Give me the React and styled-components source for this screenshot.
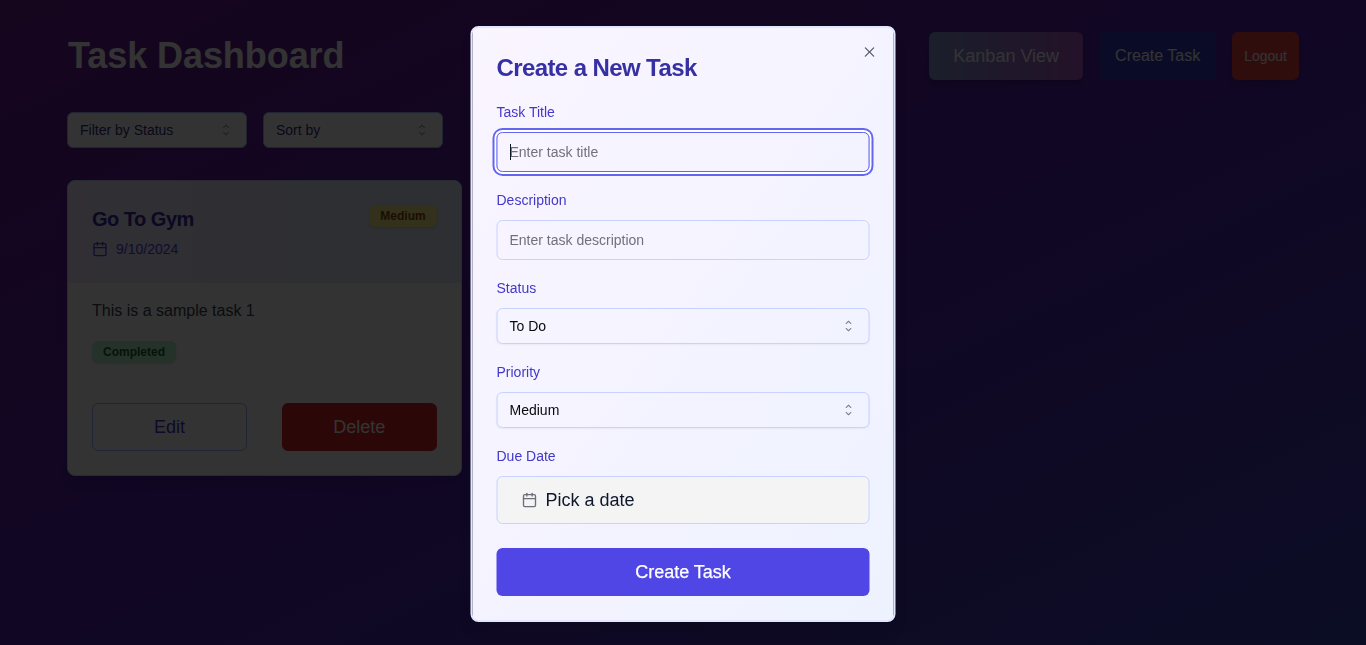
import React from "react";
import styled, { createGlobalStyle } from "styled-components";
import { Calendar } from "lucide-react";

const Global = createGlobalStyle`
  *, *::before, *::after { box-sizing: border-box; }
  html, body { margin: 0; height: 100%; overflow: hidden; }
  body { font-family: "Liberation Sans", Arial, sans-serif; font-size: 16px; line-height: 24px; color: #0f172a; }
  button, input { font: inherit; color: inherit; margin: 0; }
  h1, h2, h3, p { margin: 0; }
`;

const Page = styled.div`
  height: 645px;
  background: linear-gradient(to bottom right, #6c1a92 0%, #5522b4 50%, #3a42b8 100%);
  padding: 32px 67px;
`;

const Header = styled.header`
  display: flex;
  justify-content: space-between;
  align-items: center;
  margin-bottom: 32px;
`;

const Title = styled.h1`
  padding-left: 1px;
  font-size: 36px;
  line-height: 40px;
  font-weight: 700;
  letter-spacing: -0.07px;
  color: #fff;
`;

const Actions = styled.div`
  display: flex;
  gap: 16px;
`;

const HeaderButton = styled.button`
  height: 48px;
  border: 0;
  border-radius: 6px;
  padding: 0 ${(p) => p.$pad}px;
  font-size: ${(p) => p.$size}px;
  color: #fff;
  background: ${(p) => p.$bg};
  box-shadow: ${(p) => (p.$flat ? "none" : "0 4px 6px -1px rgba(0,0,0,.15), 0 2px 4px -2px rgba(0,0,0,.15)")};
`;

const Filters = styled.div`
  display: flex;
  gap: 16px;
  margin-bottom: 32px;
`;

const SelectBox = styled.div`
  display: flex;
  align-items: center;
  justify-content: space-between;
  width: ${(p) => p.$width || "100%"};
  height: 36px;
  padding: 0 12px;
  border: 1px solid ${(p) => p.$border || "#c7d2fe"};
  border-radius: 6px;
  background: ${(p) => p.$bg || "transparent"};
  color: ${(p) => p.$color || "#09090b"};
  font-size: 14px;
  line-height: 20px;
  box-shadow: 0 1px 2px rgba(0, 0, 0, 0.05);
  svg { opacity: .5; }
`;

const Grid = styled.main`
  display: grid;
  grid-template-columns: repeat(3, 1fr);
  gap: 24px;
`;

const Card = styled.article`
  border: 1px solid #c7d2fe;
  border-radius: 8px;
  overflow: hidden;
  background: #fff;
  box-shadow: 0 10px 15px -3px rgba(0,0,0,.1), 0 4px 6px -4px rgba(0,0,0,.1);
`;

const CardHead = styled.div`
  display: flex;
  justify-content: space-between;
  align-items: flex-start;
  height: 102px;
  padding: 24px;
  background: linear-gradient(to right, #f3e8ff, #dfe8fe);
`;

const CardTitle = styled.h3`
  font-size: 20px;
  line-height: 28px;
  font-weight: 700;
  letter-spacing: -0.025em;
  color: #3730a3;
`;

const DateRow = styled.div`
  display: flex;
  align-items: center;
  gap: 8px;
  margin-top: 6px;
  font-size: 14px;
  line-height: 20px;
  color: #4f46e5;
`;

const Badge = styled.span`
  display: inline-flex;
  align-items: center;
  height: 22px;
  padding: 0 11px;
  border-radius: 6px;
  font-size: 12px;
  line-height: 16px;
  font-weight: 700;
  color: ${(p) => p.$color};
  background: ${(p) => p.$bg};
  box-shadow: 0 1px 3px rgba(0,0,0,.1), 0 1px 2px -1px rgba(0,0,0,.1);
`;

const CardBody = styled.div`
  display: flex;
  flex-direction: column;
  align-items: flex-start;
  gap: 18px;
  padding: 16px 24px 0;
  color: #374151;
`;

const CardFoot = styled.div`
  display: flex;
  justify-content: space-between;
  padding: 40px 24px 24px;
`;

const CardButton = styled.button`
  width: 155px;
  height: 48px;
  border: 1px solid ${(p) => p.$border};
  border-radius: 6px;
  background: ${(p) => p.$bg};
  color: ${(p) => p.$color};
  font-size: 18px;
`;

const Overlay = styled.div`
  position: fixed;
  inset: 0;
  background: rgba(0, 0, 0, 0.8);
`;

const Dialog = styled.section`
  position: fixed;
  left: 50%;
  top: 324px;
  transform: translate(-50%, -50%);
  will-change: transform;
  width: 425px;
  height: 596px;
  padding: 24px;
  border: 2px solid #e0e7ff;
  border-radius: 8px;
  background: linear-gradient(to bottom right, #faf5ff, #eef2ff);
  box-shadow: 0 10px 15px -3px rgba(0,0,0,.1), 0 4px 6px -4px rgba(0,0,0,.1);
`;

const DialogTitle = styled.h2`
  margin-bottom: 16px;
  font-size: 24px;
  line-height: 32px;
  font-weight: 700;
  letter-spacing: -0.025em;
  color: #3730a3;
`;

const CloseButton = styled.button`
  position: absolute;
  right: 16px;
  top: 16px;
  display: flex;
  padding: 0;
  border: 0;
  background: none;
  opacity: .7;
`;

const Form = styled.form`
  display: flex;
  flex-direction: column;
  gap: 16px;
`;

const Field = styled.div`
  display: flex;
  flex-direction: column;
  gap: 8px;
`;

const Label = styled.label`
  font-size: 14px;
  line-height: 24px;
  color: #4338ca;
`;

const Input = styled.input`
  width: 100%;
  height: 40px;
  padding: 8px 12px;
  border: 1px solid ${(p) => (p.$active ? "#6366f1" : "#c7d2fe")};
  border-radius: 6px;
  outline: none;
  background: transparent;
  font-size: 14px;
  line-height: 20px;
  box-shadow: ${(p) => (p.$active ? "0 0 0 2px #fff, 0 0 0 4px #6366f1" : "none")};
  &::placeholder { color: #71717a; opacity: 1; }
`;

const InputWrap = styled.div`
  position: relative;
  display: flex;
`;

const Caret = styled.span`
  position: absolute;
  left: 13px;
  top: 12px;
  width: 1px;
  height: 16px;
  background: #0f172a;
  transform: translateX(0.5px);
`;

const DateButton = styled.button`
  display: flex;
  align-items: center;
  gap: 8px;
  width: 100%;
  height: 48px;
  padding: 0 24px;
  border: 1px solid #c7d2fe;
  border-radius: 6px;
  background: #f4f4f5;
  color: #0f172a;
  font-size: 18px;
  svg { opacity: .6; }
`;

const Submit = styled.button`
  height: 48px;
  margin-top: 8px;
  border: 0;
  border-radius: 6px;
  background: #4f46e5;
  color: #fff;
  font-size: 18px;
  -webkit-text-stroke: .25px #fff;
`;

const Svg = ({ size = 16, children }) => (
  <svg width={size} height={size} viewBox="0 0 15 15" fill="currentColor" fillRule="evenodd" clipRule="evenodd">
    {children}
  </svg>
);

const Chevrons = () => (
  <Svg>
    <path d="M4.932 5.568a.45.45 0 0 0 .636 0L7.5 3.636l1.932 1.932a.45.45 0 0 0 .636-.636l-2.25-2.25a.45.45 0 0 0-.636 0l-2.25 2.25a.45.45 0 0 0 0 .636ZM10.068 9.432a.45.45 0 0 0-.636 0L7.5 11.364 5.568 9.432a.45.45 0 0 0-.636.636l2.25 2.25a.45.45 0 0 0 .636 0l2.25-2.25a.45.45 0 0 0 0-.636Z" />
  </Svg>
);

const CloseIcon = () => (
  <Svg>
    <path d="M11.782 4.032a.575.575 0 1 0-.813-.814L7.5 6.687 4.032 3.218a.575.575 0 0 0-.814.814L6.687 7.5l-3.469 3.468a.575.575 0 0 0 .814.814L7.5 8.313l3.469 3.469a.575.575 0 0 0 .813-.814L8.313 7.5l3.469-3.468Z" />
  </Svg>
);

export default function App() {
  return (
    <>
      <Global />
      <Page>
        <Header>
          <Title>Task Dashboard</Title>
          <Actions>
            <HeaderButton $pad={24} $size={18} $bg="linear-gradient(to right, #8498d8, #b058cc)">Kanban View</HeaderButton>
            <HeaderButton $pad={16} $size={16} $bg="#363cc0" $flat>Create Task</HeaderButton>
            <HeaderButton $pad={12} $size={14} $bg="#ef4444">Logout</HeaderButton>
          </Actions>
        </Header>
        <Filters>
          <SelectBox $width="180px" $bg="#fff" $border="#a5b4fc" $color="#312e81">Filter by Status<Chevrons /></SelectBox>
          <SelectBox $width="180px" $bg="#fff" $border="#a5b4fc" $color="#312e81">Sort by<Chevrons /></SelectBox>
        </Filters>
        <Grid>
          <Card>
            <CardHead>
              <div>
                <CardTitle>Go To Gym</CardTitle>
                <DateRow><Calendar size={16} />9/10/2024</DateRow>
              </div>
              <Badge $bg="#fef08a" $color="#854d0e">Medium</Badge>
            </CardHead>
            <CardBody>
              <p>This is a sample task 1</p>
              <Badge $bg="#bbf7d0" $color="#166534">Completed</Badge>
            </CardBody>
            <CardFoot>
              <CardButton $bg="transparent" $border="#a5b4fc" $color="#4338ca">Edit</CardButton>
              <CardButton $bg="#dc2626" $border="#dc2626" $color="#fff">Delete</CardButton>
            </CardFoot>
          </Card>
        </Grid>
      </Page>
      <Overlay />
      <Dialog role="dialog">
        <DialogTitle>Create a New Task</DialogTitle>
        <Form>
          <Field>
            <Label>Task Title</Label>
            <InputWrap>
              <Input $active placeholder="Enter task title" />
              <Caret />
            </InputWrap>
          </Field>
          <Field>
            <Label>Description</Label>
            <Input placeholder="Enter task description" />
          </Field>
          <Field>
            <Label>Status</Label>
            <SelectBox>To Do<Chevrons /></SelectBox>
          </Field>
          <Field>
            <Label>Priority</Label>
            <SelectBox>Medium<Chevrons /></SelectBox>
          </Field>
          <Field>
            <Label>Due Date</Label>
            <DateButton type="button"><Calendar size={16} />Pick a date</DateButton>
          </Field>
          <Submit type="button">Create Task</Submit>
        </Form>
        <CloseButton aria-label="Close"><CloseIcon /></CloseButton>
      </Dialog>
    </>
  );
}
